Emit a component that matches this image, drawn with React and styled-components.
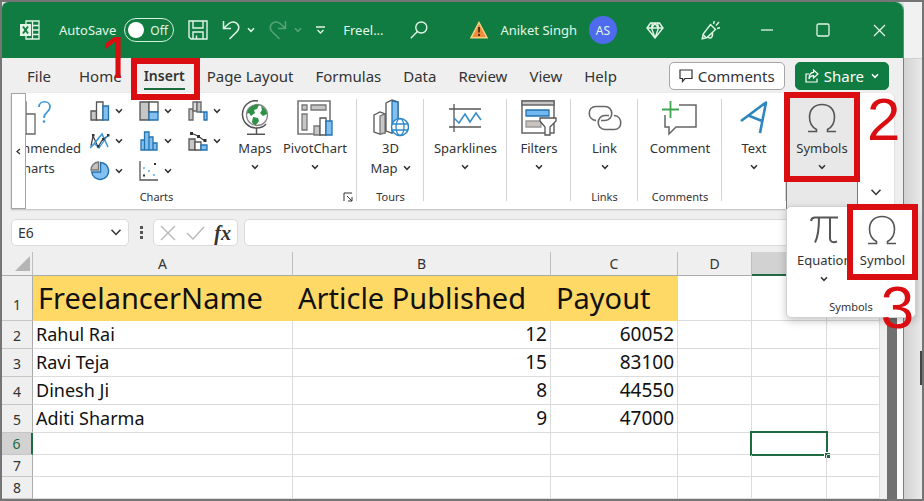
import React from 'react';
import styled, { createGlobalStyle, css } from 'styled-components';

const GlobalStyle = createGlobalStyle`
    *, *::before, *::after {
        box-sizing: border-box;
    }

    body {
        margin: 0;
        font-family: "Noto Sans", "Open Sans", sans-serif;
        color: #333;
    }

    button, input {
        font: inherit;
        color: inherit;
    }

    svg {
        display: block;
        flex: none;
    }
`;

const Frame = styled.div`
    display: flex;
    min-height: 100vh;
    border: 2px solid #757575;
    background-color: #e4e4e4;
    overflow: hidden;
`;

const Window = styled.main`
    display: flex;
    flex-direction: column;
    flex: 1;
    min-width: 0;
    background-color: #efefef;
    border-right: 1px solid #4c9a70;
    border-radius: 6px 8px 0 0;
`;

const Desktop = styled.aside`
    display: flex;
    flex-direction: column;
    justify-content: space-between;
    align-items: flex-end;
    width: 18px;
    background: linear-gradient(to right, #d2d2d2, #e9e9e9);
`;

const DesktopTop = styled.div`
    width: 100%;
    height: 57px;
    background-color: #f1f1f1;
    border-bottom: 1px solid #d0d0d0;
`;

const DesktopHandle = styled.div`
    width: 2px;
    height: 34px;
    margin-bottom: 114px;
    background-color: #444;
`;

const BareButton = styled.button`
    display: flex;
    align-items: center;
    justify-content: center;
    padding: 0;
    border: none;
    background: none;
`;

/* title bar */

const TitleBar = styled.header`
    display: flex;
    justify-content: space-between;
    align-items: center;
    height: 56px;
    padding-left: 18px;
    background-color: #107c41;
    border-radius: 6px 8px 0 0;
    color: #e2f6e8;
    font-size: 13px;
`;

const TitleGroup = styled.div`
    display: flex;
    align-items: center;
    gap: ${props => props.$gap}px;
    white-space: nowrap;
`;

const Toggle = styled.label`
    display: flex;
    align-items: center;
    gap: 6px;
    width: 50px;
    height: 24px;
    padding-left: 3px;
    border: 1px solid #d5f0de;
    border-radius: 12px;
    font-size: 12px;
`;

const ToggleInput = styled.input`
    appearance: none;
    width: 16px;
    height: 16px;
    margin: 0;
    border-radius: 50%;
    background-color: white;
`;

const FileName = styled.span`
    padding: 0 12px 0 4px;
`;

const Avatar = styled.span`
    display: flex;
    align-items: center;
    justify-content: center;
    width: 28px;
    height: 28px;
    border-radius: 50%;
    background-color: #4f6bed;
    font-size: 12px;
`;

const WindowButtons = styled.div`
    display: flex;
    gap: 8px;
`;

const WindowButton = styled(BareButton)`
    width: 48px;
    height: 40px;
`;

/* tabs */

const TabBar = styled.nav`
    display: flex;
    align-items: center;
    justify-content: space-between;
    height: 35px;
    padding: 0 14px 0 25px;
    font-size: 15px;
`;

const Tabs = styled.div`
    display: flex;
    gap: 22px;
`;

const Tab = styled(BareButton)`
    position: relative;
    line-height: 24px;
    white-space: nowrap;

    &:first-child {
        margin-right: 6px;
    }

    ${props => props.$active && css`
        font-size: 14px;
        font-weight: 600;
        box-shadow: 0 2px 0 #1e6b41;
    `}
`;

const TabActions = styled.div`
    display: flex;
    gap: 10px;
`;

const ActionButton = styled(BareButton)`
    gap: 5px;
    height: 28px;
    padding: 0 9px;
    border: 1px solid ${props => (props.$primary ? '#107c41' : '#a5a5a5')};
    border-radius: 5px;
    background-color: ${props => (props.$primary ? '#107c41' : 'white')};
    color: ${props => (props.$primary ? 'white' : '#333')};
`;

const ShareText = styled.span`
    margin-right: 2px;
`;

/* tutorial marks */

const Highlight = styled.span`
    position: absolute;
    inset: ${props => props.$inset};
    border: 6px solid #da0d10;
    z-index: 5;
    pointer-events: none;
`;

const StepNumber = styled.span`
    position: absolute;
    left: ${props => props.$left}px;
    top: ${props => props.$top}px;
    z-index: 6;
    font-family: ${props => (props.$plain ? 'Inter' : '"Liberation Sans"')}, Arial, sans-serif;
    font-size: ${props => (props.$plain ? 56 : 60)}px;
    font-weight: 400;
    line-height: 60px;
    color: #da0d10;
    pointer-events: none;
`;

/* ribbon */

const Ribbon = styled.section`
    display: flex;
    height: 116px;
    margin: 0 9px;
    background-color: white;
    border-radius: 0 6px 6px 0;
    box-shadow: 0 1px 2px #bdbdbd;
    font-size: 13px;
`;

const ScrollButton = styled(BareButton)`
    width: 15px;
    border: 1px solid #a3a3a3;
    background-color: white;
`;

const Group = styled.div`
    position: relative;
    display: flex;
    flex-direction: column;
    justify-content: space-between;
    align-items: center;
    width: ${props => props.$width}px;
    padding: 6px 0 4px;

    &::after {
        content: "";
        position: absolute;
        right: 0;
        top: 6px;
        bottom: 8px;
        width: ${props => (props.$open ? 0 : 1)}px;
        background-color: #d4d4d4;
    }

    ${props => props.$open && css`
        padding-bottom: 0;
        background-color: #e8e8e8;
        border: solid #777;
        border-width: 0 1px;
    `}
`;

const ChartsGroup = styled(Group)`
    flex: 1;
    align-items: stretch;
`;

const ChartsBody = styled.div`
    display: flex;
`;

const Clipped = styled.div`
    display: flex;
    justify-content: flex-end;
    width: 55px;
    overflow: hidden;
`;

const MiniGrid = styled.div`
    display: grid;
    grid-template-columns: repeat(3, 49px);
    grid-auto-rows: 30px;
    padding-left: 9px;
    margin-top: -3px;
`;

const MiniButton = styled(BareButton)`
    justify-content: flex-start;
    gap: 5px;
`;

const BigButton = styled(BareButton)`
    position: relative;
    flex: none;
    flex-direction: column;
    justify-content: flex-start;
    gap: 2px;
    min-width: ${props => props.$width || 0}px;
    line-height: 20px;
    white-space: nowrap;
`;

const IconSlot = styled.span`
    display: flex;
    align-items: center;
    justify-content: center;
    height: 38px;
`;

const LabelLine = styled.span`
    display: flex;
    align-items: center;
    justify-content: center;
    gap: 5px;
    min-height: 16px;
    line-height: 18px;
`;

const GroupFooter = styled.div`
    display: flex;
    align-items: center;
    font-size: 11px;
    line-height: 16px;
`;

const FooterLabel = styled.span`
    flex: 1;
    text-align: center;
`;

const Launcher = styled(BareButton)`
    justify-content: flex-end;
    width: 70px;
    padding-right: 4px;
`;

const RibbonEnd = styled.div`
    display: flex;
    align-items: flex-end;
    justify-content: center;
    width: 36px;
    padding-bottom: 12px;
`;

const Menu = styled.div`
    position: absolute;
    left: -1px;
    top: 113px;
    z-index: 4;
    width: 130px;
    padding: 4px 0 2px;
    border: 1px solid #d0d0d0;
    border-radius: 5px;
    background-color: white;
    box-shadow: 0 3px 8px rgba(0, 0, 0, 0.22);
`;

const MenuItems = styled.div`
    display: flex;
    justify-content: space-between;
    height: 88px;
    padding: 0 10px;
`;

/* formula bar */

const FormulaBar = styled.div`
    display: flex;
    align-items: center;
    gap: 6px;
    padding: 10px 9px 6px;
    font-size: 14px;
`;

const Field = styled.div`
    display: flex;
    align-items: center;
    width: ${props => props.$width}px;
    height: 27px;
    padding: 0 6px;
    border: 1px solid #dadada;
    border-radius: 5px;
    background-color: white;
`;

const FieldInput = styled.input`
    flex: 1;
    width: 100%;
    min-width: 0;
    padding: 0;
    border: none;
    outline: none;
    background: none;
`;

const WideField = styled(Field)`
    flex: 1;
`;

const Dots = styled.span`
    display: flex;
    justify-content: center;
    width: 12px;
`;

const FunctionField = styled(Field)`
    justify-content: space-between;
`;

const FxButton = styled(BareButton)`
    font-family: "Liberation Serif", serif;
    font-size: 20px;
    font-style: italic;
    font-weight: 700;
    line-height: 20px;
`;

/* sheet */

const SheetArea = styled.div`
    display: flex;
    flex: 1;
`;

const Sheet = styled.table`
    flex: 1;
    width: 100%;
    table-layout: fixed;
    border-collapse: separate;
    border-spacing: 0;
    background-color: white;
`;

const ColumnHead = styled.th`
    height: 24px;
    padding: 0;
    border-right: 1px solid #bdbdbd;
    border-bottom: ${props => (props.$active ? '2px solid #1e6b41' : '1px solid #ababab')};
    background-color: ${props => (props.$active ? '#d2d2d2' : '#efefef')};
    font-size: 14px;
    font-weight: 400;
    line-height: 20px;
`;

const RowHead = styled.th`
    padding: 0 0 ${props => props.$pad}px;
    border-right: ${props => (props.$active ? '2px solid #1e6b41' : '1px solid #ababab')};
    border-bottom: 1px solid #c6c6c6;
    background-color: ${props => (props.$active ? '#d2d2d2' : '#efefef')};
    color: ${props => (props.$active ? '#1e6b41' : '#333')};
    font-size: 14px;
    font-weight: 400;
    line-height: 20px;
    vertical-align: bottom;
`;

const Corner = styled(ColumnHead)`
    svg {
        margin-left: 13px;
    }
`;

const Row = styled.tr`
    height: ${props => props.$height}px;
`;

const Cell = styled.td`
    position: relative;
    padding: 0 3px;
    border-right: 1px solid #dcdcdc;
    border-bottom: 1px solid #dcdcdc;
    color: #111;
    font-size: ${props => (props.$number ? 19 : 18)}px;
    line-height: 21px;
    text-align: ${props => (props.$number ? 'right' : 'left')};
    white-space: nowrap;

    ${props => props.$heading && css`
        padding: 0 5px;
        border-color: #ffd966;
        background-color: #ffd966;
        font-size: 29px;
        line-height: 40px;
    `}
`;

const ActiveOutline = styled.span`
    position: absolute;
    inset: -2px;
    border: 2px solid #1e6b41;

    &::after {
        content: "";
        position: absolute;
        right: -4px;
        bottom: -4px;
        width: 6px;
        height: 6px;
        border: solid white;
        border-width: 1px 0 0 1px;
        background-color: #1e6b41;
    }
`;

const ScrollBar = styled.div`
    width: 23px;
    padding-left: 7px;
    padding-right: 6px;
    background: linear-gradient(to right, #efefef 7px, #fafafa 7px);
`;

const Thumb = styled.div`
    height: 100%;
    background-color: #707070;
`;

/* icons */

const Svg = ({ w, h = w, box, children, stroke = 'currentColor', sw = 1.3 }) => (
    <svg
        width={w}
        height={h}
        viewBox={box || `0 0 ${w} ${h}`}
        fill="none"
        stroke={stroke}
        strokeWidth={sw}
        aria-hidden="true"
    >
        {children}
    </svg>
);

const Chevron = ({ w = 8, color = 'currentColor' }) => (
    <Svg w={w} h={w * 0.75} box="0 0 8 6" stroke={color} sw={w > 9 ? 1 : 1.5}>
        <path d="M1 1.2 4 4.3 7 1.2" />
    </Svg>
);

const ExcelIcon = () => (
    <Svg w={20} stroke="#e2f6e8">
        <path d="M6 4V1h13v18H6v-3M12.500 1v18M12 5.500h7M12 10h7M12 14.500h7" />
        <rect x="0" y="4" width="11" height="12" fill="#e2f6e8" stroke="none" />
        <path d="M3 6.500 8 13.500M8 6.500 3 13.500" stroke="#107c41" strokeWidth="1.900" />
    </Svg>
);

const SaveIcon = () => (
    <Svg w={20} sw={1.4}>
        <path d="M1 1h18v18H3l-2-2zM5 1v7h10V1M5 19v-7h10v7M8.500 19v-3.500" />
    </Svg>
);

const UndoIcon = () => (
    <Svg w={18} h={20} sw={1.5}>
        <path d="M1.500 1v7.500H9M1.800 8 7 3.500C10 1 14 1.600 15.800 4.500c1.600 2.600 1 5.300-1 7.300L7.500 19" />
    </Svg>
);

const RedoIcon = () => (
    <Svg w={18} h={20} stroke="#55a578" sw={1.5}>
        <path d="M16.500 1v7.500H9M16.200 8 11 3.500C8 1 4 1.600 2.200 4.500c-1.600 2.600-1 5.300 1 7.300L10.500 19" />
    </Svg>
);

const CustomizeIcon = () => (
    <Svg w={9} h={9}>
        <path d="M0 1h9M1.500 4l3 3 3-3" />
    </Svg>
);

const SearchIcon = () => (
    <Svg w={18} sw={1.4}>
        <circle cx="11.300" cy="6.500" r="5.500" />
        <path d="M7.400 10.500.8 17.200" />
    </Svg>
);

const WarningIcon = () => (
    <Svg w={18}>
        <path d="M9 1.500 17 16.800H1z" fill="#f08a3c" stroke="#f3cf80" strokeWidth="1.500" />
        <path d="M9 6v5.500M9 13v2" stroke="#4a2a10" strokeWidth="1.800" />
    </Svg>
);

const DiamondIcon = () => (
    <Svg w={18} h={17} sw={1.4}>
        <path d="M4.500 1h9L17 6l-8 10L1 6zM1 6h16M6.500 1 5.500 6 9 16l3.500-10-1-5M5.500 6 9 1.500 12.500 6" />
    </Svg>
);

const PenIcon = () => (
    <Svg w={20} sw={1.4}>
        <path d="M9.500 4.500 14.500 9.500 6 17.500 1.200 18.800 2.200 14zM2.500 15l3 3M7 16.500c1 3 5 2 4.500-3.500M12.500 4l.8-3M15 5.500l3-3.500M16 8.500l3-.8" />
    </Svg>
);

const CommentsIcon = () => (
    <Svg w={14} h={14} sw={1.2}>
        <path d="M1 1h12v8.500H6L3.500 12.500v-3H1z" />
    </Svg>
);

const ShareIcon = () => (
    <Svg w={14} h={14} sw={1.2}>
        <path d="M4 5H1v8h11V9.500M8.500 1l4.500 4-4.500 4V6.700C6.300 6.700 4.800 7.700 4 10c0-4 1.800-6.500 4.500-6.700z" />
    </Svg>
);

const RecommendedIcon = () => (
    <Svg w={60} h={36} stroke="#666">
        <path d="M2 12h10v22H2z" />
        <path d="M12 2h9v32h-9z" fill="#c6c6c6" />
        <path d="M21 14h9v20h-9z" fill="#fff" />
        <path d="M34 7c0-7 11-7 11 0 0 5.500-6 5-6 11" stroke="#3a96d6" strokeWidth="1.700" />
        <circle cx="39" cy="21.500" r="1.300" fill="#3a96d6" stroke="none" />
    </Svg>
);

const ColumnIcon = () => (
    <Svg w={20} stroke="#555">
        <path d="M1 10h5.500v9H1z" fill="#c6c6c6" />
        <path d="M6.500 1H13v18H6.500z" fill="#fff" />
        <path d="M13 5h5.500v14H13z" fill="#83c0f0" stroke="#2372b0" />
    </Svg>
);

const LineIcon = () => (
    <Svg w={20} h={18}>
        <path d="m1 14 2-10 5 11 5-8 5-3" stroke="#444" />
        <path d="m0 16 4-4 8-10 6 13" stroke="#3a96d6" strokeWidth="1.600" />
        <path d="m4 11 5 5 9-13" stroke="#3a96d6" />
        <path d="M2 2h2.500v2.500H2zM7 13h2.500v2.500H7zM12 6h2.500v2.500H12zM17 2h2.500v2.500H17z" fill="#333" stroke="none" />
    </Svg>
);

const PieIcon = () => (
    <Svg w={20}>
        <path d="M10.500 1.500a8.500 8.500 0 1 1-8.800 9.500h8.800z" fill="#83c0f0" stroke="#2372b0" strokeWidth="1.500" />
        <path d="M8.500 1v8H1a8 8 0 0 1 7.500-8z" fill="#c9c3bf" stroke="#777" />
    </Svg>
);

const TreemapIcon = () => (
    <Svg w={20} stroke="#555">
        <path d="M1 1h9v18H1z" fill="#c6c6c6" />
        <path d="M10 1h9v10h-9z" fill="#fff" />
        <path d="M10 11h9v8h-9z" fill="#83c0f0" stroke="#2372b0" />
    </Svg>
);

const HistogramIcon = () => (
    <Svg w={20} h={20} stroke="#2372b0">
        <path d="M2 9h3.500v10H2zM5.500 1H10v18H5.500zM10 6h4v13h-4zM14 12h4v7h-4z" fill="#83c0f0" />
    </Svg>
);

const ScatterIcon = () => (
    <Svg w={20} stroke="#555">
        <path d="M1 0v19h18" />
        <path d="M15 2h2v2h-2zM4 13.500h2v2H4z" fill="#333" stroke="none" />
        <path d="M4 6h2v2H4zM9 9h2v2H9zM14 13h2v2h-2z" fill="#83c0f0" stroke="none" />
    </Svg>
);

const WaterfallIcon = () => (
    <Svg w={20} stroke="#666">
        <path d="M1 8h4v11H1z" fill="#c6c6c6" />
        <path d="M5 1h4v9H5z" fill="#ddd" />
        <path d="M9 1h4v10H9z" fill="#c6c6c6" />
        <path d="M12 11h4v8h3v-8h-5z" fill="#83c0f0" stroke="#2372b0" />
    </Svg>
);

const ComboIcon = () => (
    <Svg w={20} stroke="#555">
        <path d="M1 8h6v11H1z" fill="#c6c6c6" />
        <path d="M7 11h6v8H7z" fill="#fff" />
        <path d="M13 14h6v5h-6z" fill="#83c0f0" stroke="#2372b0" />
        <path d="m3 2 7 3 7 5" stroke="#444" />
        <path d="M2 1h3v3H2zM9 4h3v3H9zM15.500 8h3v3h-3z" fill="#333" stroke="none" />
    </Svg>
);

const GlobeIcon = () => (
    <Svg w={28} h={36} stroke="#555">
        <circle cx="16" cy="15" r="10.500" fill="#fff" stroke="#888" />
        <path d="M7 10c3-5 8-6 11-5l-2 4-3 1 1 3-4 3-2-3-2 1zM20 6c4 2 6 5 6 8l-4 2-3-3 2-3zM12 17l5 1 1 3-3 4c-2 0-4-2-4-3z" fill="#2f9148" stroke="none" />
        <path d="M17 1C8-1 1 7 1.500 15c.3 7 6 13 14 13 4 0 7.500-1.500 9.500-4M15.500 28v6M6 34.300h18" strokeWidth="1.500" />
    </Svg>
);

const PivotIcon = () => (
    <Svg w={36} stroke="#777">
        <path d="M1 1h32v33H1z" fill="#fff" strokeWidth="1.600" />
        <path d="M5 5h5v5H5zM14 5h15v5H14zM5 14h5v16H5z" fill="#c6c6c6" />
        <path d="M17 26h6v9h-6z" fill="#c6c6c6" />
        <path d="M23 18h6v17h-6z" fill="#fff" stroke="#555" />
        <path d="M29 21h6v14h-6z" fill="#83c0f0" stroke="#2372b0" />
    </Svg>
);

const Map3dIcon = () => (
    <Svg w={36} h={38} stroke="#555">
        <path d="m1 16 6-3 5 2v19l-5 1-6-2z" fill="#fff" />
        <path d="M7 17v18l5-1V15z" fill="#c6c6c6" stroke="#777" />
        <path d="m13 4 6-3 6 2v28l-6 3-6-2z" fill="#fff" />
        <path d="M19 2v32l6-3V3z" fill="#83c0f0" stroke="#2372b0" />
        <circle cx="27" cy="28" r="8.500" fill="#fff" stroke="#2d87c8" strokeWidth="1.500" />
        <ellipse cx="27" cy="28" rx="4" ry="8.500" stroke="#2d87c8" />
        <path d="M19 25h16M19 31h16" stroke="#2d87c8" />
    </Svg>
);

const SparkIcon = () => (
    <Svg w={34} h={30} stroke="#555">
        <path d="M1 6h32M1 24h32" strokeWidth="1.500" />
        <path d="M6 1v28" />
        <path d="m6 15 5 5 6-9 5 8 6-9 5 7" stroke="#3a8fc8" strokeWidth="1.600" />
    </Svg>
);

const FilterIcon = () => (
    <Svg w={36} stroke="#666">
        <path d="M1 1h32v32H1z" fill="#fff" strokeWidth="1.500" />
        <path d="M1 1h32v4H1z" fill="#c6c6c6" />
        <path d="M5 10h23v6H5z" fill="#72b8f0" stroke="#2372b0" />
        <path d="M5 21h15v6H5z" fill="#c9c3bf" stroke="#999" />
        <path d="M19 18h16v3l-6 6v8h-5v-8l-5-6z" fill="#fff" stroke="#555" />
    </Svg>
);

const LinkIcon = () => (
    <Svg w={34} h={26} stroke="#666" sw={1.6}>
        <path d="M8 15.500C-1 15-1 1.500 8 1.500h9c9 0 9 14 0 14h-4" />
        <path d="M26 10.500c9 .5 9 14 0 14h-9c-9 0-9-14 0-14h4" />
    </Svg>
);

const NewCommentIcon = () => (
    <Svg w={36} h={36} stroke="#666" sw={1.5}>
        <path d="M17 5h17v22H14l-7 7v-7H3V15" />
        <path d="M0 9.500h17M8.500 1v17" stroke="#3fa550" strokeWidth="1.800" />
    </Svg>
);

const TextIcon = () => (
    <Svg w={28} h={34} stroke="#2e86bd" sw={2.6}>
        <path d="M1 20 26 1.500 20 32M8.500 14.500 22 20" strokeLinejoin="round" />
    </Svg>
);

const OmegaIcon = () => (
    <Svg w={30} h={30} stroke="#555" sw={1.6}>
        <path d="M1 28.500h8.500v-2C4.500 24 2.500 19 2.500 14 2.500 6.500 7.500 1.500 15 1.500S27.500 6.500 27.500 14c0 5-2 10-7 12.500v2H29" />
    </Svg>
);

const PiIcon = () => (
    <Svg w={29} h={28} stroke="#555" sw={2}>
        <path d="M1 5c.5-3 2-3.500 4-3.500h23M9 1.500C9 13 8.500 20 5 26.500M20 1.500v21c0 3.500 3 4.500 7 3" />
    </Svg>
);

const LauncherIcon = () => (
    <Svg w={10} h={10} sw={1}>
        <path d="M1 9V1h8M4 4l5 5M9 5v4H5" />
    </Svg>
);

const DotsIcon = () => (
    <Svg w={3} h={13} stroke="none">
        <path d="M0 0h3v3H0zM0 5h3v3H0zM0 10h3v3H0z" fill="#555" />
    </Svg>
);

const tabs = ['File', 'Home', 'Insert', 'Page Layout', 'Formulas', 'Data', 'Review', 'View', 'Help'];

const miniCharts = [
    ['Column chart', ColumnIcon],
    ['Hierarchy chart', TreemapIcon],
    ['Waterfall chart', WaterfallIcon],
    ['Line chart', LineIcon],
    ['Statistic chart', HistogramIcon],
    ['Combo chart', ComboIcon],
    ['Pie chart', PieIcon],
    ['Scatter chart', ScatterIcon],
];

const groups = [
    { name: 'Tours', width: 67, icon: Map3dIcon, lines: ['3D', 'Map'], inline: true },
    { width: 83, icon: SparkIcon, lines: ['Sparklines'], arrow: true },
    { width: 64, icon: FilterIcon, lines: ['Filters'], arrow: true },
    { name: 'Links', width: 67, icon: LinkIcon, lines: ['Link'], arrow: true },
    { name: 'Comments', width: 84, icon: NewCommentIcon, lines: ['Comment'] },
    { width: 64, icon: TextIcon, lines: ['Text'], arrow: true },
];

const columns = ['A', 'B', 'C', 'D', 'E', 'F'];

const rows = [
    { height: 45, pad: 5, heading: true, cells: ['FreelancerName', 'Article Published', 'Payout'] },
    { height: 28, pad: 2, cells: ['Rahul Rai', 12, 60052] },
    { height: 28, pad: 2, cells: ['Ravi Teja', 15, 83100] },
    { height: 28, pad: 2, cells: ['Dinesh Ji', 8, 44550] },
    { height: 28, pad: 2, cells: ['Aditi Sharma', 9, 47000] },
    { height: 22, pad: 0, cells: [] },
    { height: 22, pad: 0, cells: [] },
    { height: 22, pad: 0, cells: [] },
];

const RibbonButton = ({ icon: Icon, lines, arrow, inline, width, children }) => (
    <BigButton type="button" $width={width}>
        <IconSlot><Icon /></IconSlot>
        {lines.map((line, i) => (
            <LabelLine key={line}>
                {line}
                {inline && i === lines.length - 1 && <Chevron />}
            </LabelLine>
        ))}
        {arrow && <LabelLine><Chevron /></LabelLine>}
        {children}
    </BigButton>
);

const TopBar = () => (
    <TitleBar>
        <TitleGroup $gap={14}>
            <TitleGroup $gap={19}>
                <ExcelIcon />
                <TitleGroup $gap={8}>
                    <span id="autosave">AutoSave</span>
                    <Toggle>
                        <ToggleInput type="checkbox" role="switch" aria-labelledby="autosave" />
                        Off
                    </Toggle>
                </TitleGroup>
            </TitleGroup>
            <BareButton type="button" aria-label="Save"><SaveIcon /></BareButton>
            <TitleGroup $gap={7}>
                <BareButton type="button" aria-label="Undo"><UndoIcon /></BareButton>
                <Chevron />
            </TitleGroup>
            <TitleGroup $gap={7}>
                <BareButton type="button" aria-label="Redo"><RedoIcon /></BareButton>
                <Chevron color="#55a578" />
            </TitleGroup>
            <BareButton type="button" aria-label="Customize toolbar"><CustomizeIcon /></BareButton>
            <FileName>Freel...</FileName>
            <BareButton type="button" aria-label="Search"><SearchIcon /></BareButton>
        </TitleGroup>
        <TitleGroup $gap={14}>
            <TitleGroup $gap={12}>
                <WarningIcon />
                <span>Aniket Singh</span>
                <Avatar>AS</Avatar>
            </TitleGroup>
            <WindowButtons>
                <WindowButton type="button" aria-label="Premium"><DiamondIcon /></WindowButton>
                <WindowButton type="button" aria-label="Draw"><PenIcon /></WindowButton>
                <WindowButton type="button" aria-label="Minimize">
                    <Svg w={12}><path d="M0 6h12" /></Svg>
                </WindowButton>
                <WindowButton type="button" aria-label="Maximize">
                    <Svg w={14}><rect x="1" y="1" width="12" height="12" rx="1.500" /></Svg>
                </WindowButton>
                <WindowButton type="button" aria-label="Close">
                    <Svg w={13}><path d="m1 1 11 11M12 1 1 12" /></Svg>
                </WindowButton>
            </WindowButtons>
        </TitleGroup>
    </TitleBar>
);

const TabRow = () => (
    <TabBar>
        <Tabs>
            {tabs.map(tab => (
                <Tab key={tab} type="button" $active={tab === 'Insert'}>
                    {tab}
                    {tab === 'Insert' && (
                        <>
                            <Highlight $inset="-6px -15px -12px -13px" />
                            <StepNumber $plain $left={-41} $top={-36}>1</StepNumber>
                        </>
                    )}
                </Tab>
            ))}
        </Tabs>
        <TabActions>
            <ActionButton type="button"><CommentsIcon />Comments</ActionButton>
            <ActionButton type="button" $primary>
                <ShareIcon />
                <ShareText>Share</ShareText>
                <Chevron />
            </ActionButton>
        </TabActions>
    </TabBar>
);

const SymbolsMenu = () => (
    <Menu>
        <MenuItems>
            <RibbonButton icon={PiIcon} lines={['Equation']} arrow />
            <RibbonButton icon={OmegaIcon} lines={['Symbol']}>
                <Highlight $inset="-7px -13px 19px -13px" />
                <StepNumber $left={21} $top={67}>3</StepNumber>
            </RibbonButton>
        </MenuItems>
        <GroupFooter><FooterLabel>Symbols</FooterLabel></GroupFooter>
    </Menu>
);

const InsertRibbon = () => (
    <Ribbon>
        <ScrollButton type="button" aria-label="Scroll left">
            <Svg w={5} h={7}><path d="M4 1 1 3.500 4 6" /></Svg>
        </ScrollButton>
        <ChartsGroup>
            <ChartsBody>
                <Clipped>
                    <RibbonButton icon={RecommendedIcon} lines={['Recommended', 'Charts']} />
                </Clipped>
                <MiniGrid>
                    {miniCharts.map(([name, Icon]) => (
                        <MiniButton key={name} type="button" aria-label={name}>
                            <Icon />
                            <Chevron />
                        </MiniButton>
                    ))}
                </MiniGrid>
                <RibbonButton icon={GlobeIcon} lines={['Maps']} arrow width={36} />
                <RibbonButton icon={PivotIcon} lines={['PivotChart']} arrow width={84} />
            </ChartsBody>
            <GroupFooter>
                <FooterLabel>Charts</FooterLabel>
                <Launcher type="button" aria-label="Chart options"><LauncherIcon /></Launcher>
            </GroupFooter>
        </ChartsGroup>
        {groups.map(({ name, width, ...button }) => (
            <Group key={button.lines[0]} $width={width}>
                <RibbonButton {...button} />
                <GroupFooter>{name}</GroupFooter>
            </Group>
        ))}
        <Group $width={72} $open>
            <RibbonButton icon={OmegaIcon} lines={['Symbols']} arrow width={70}>
                <Highlight $inset="-7px -3px -7px -3px" />
                <StepNumber $left={80} $top={-9}>2</StepNumber>
            </RibbonButton>
            <SymbolsMenu />
        </Group>
        <RibbonEnd>
            <BareButton type="button" aria-label="Collapse ribbon"><Chevron w={12} /></BareButton>
        </RibbonEnd>
    </Ribbon>
);

const FormulaRow = () => (
    <FormulaBar>
        <Field $width={118}>
            <FieldInput aria-label="Name box" defaultValue="E6" />
            <BareButton type="button" aria-label="Open names"><Chevron w={12} /></BareButton>
        </Field>
        <Dots><DotsIcon /></Dots>
        <FunctionField $width={85}>
            <BareButton type="button" aria-label="Cancel">
                <Svg w={16} stroke="#bbb" sw={1.5}><path d="m1 1 14 14M15 1 1 15" /></Svg>
            </BareButton>
            <BareButton type="button" aria-label="Enter">
                <Svg w={19} h={14} stroke="#bbb" sw={1.5}><path d="m1 7 6 6L18 1" /></Svg>
            </BareButton>
            <FxButton type="button">fx</FxButton>
        </FunctionField>
        <WideField>
            <FieldInput aria-label="Formula" />
        </WideField>
    </FormulaBar>
);

const SheetGrid = () => (
    <SheetArea>
        <Sheet>
            <colgroup>
                <col width="31" />
                <col width="260" />
                <col width="258" />
                <col width="127" />
                <col width="74" />
                <col width="75" />
                <col />
            </colgroup>
            <thead>
                <tr>
                    <Corner>
                        <Svg w={15} stroke="none"><path d="M15 0v15H0z" fill="#b5b5b5" /></Svg>
                    </Corner>
                    {columns.map(name => (
                        <ColumnHead key={name} scope="col" $active={name === 'E'}>
                            {name === 'E' || name === 'F' ? '' : name}
                        </ColumnHead>
                    ))}
                </tr>
            </thead>
            <tbody>
                {rows.map((row, i) => (
                    <Row key={i} $height={row.height}>
                        <RowHead scope="row" $active={i === 5} $pad={row.pad}>{i + 1}</RowHead>
                        {columns.map((name, c) => (
                            <Cell
                                key={name}
                                $heading={row.heading && c < 3}
                                $number={typeof row.cells[c] === 'number'}
                            >
                                {row.cells[c]}
                                {i === 5 && name === 'E' && <ActiveOutline />}
                            </Cell>
                        ))}
                    </Row>
                ))}
            </tbody>
        </Sheet>
        <ScrollBar><Thumb /></ScrollBar>
    </SheetArea>
);

const App = () => {
    return (
        <>
            <GlobalStyle />
            <Frame>
                <Window>
                    <TopBar />
                    <TabRow />
                    <InsertRibbon />
                    <FormulaRow />
                    <SheetGrid />
                </Window>
                <Desktop>
                    <DesktopTop />
                    <DesktopHandle />
                </Desktop>
            </Frame>
        </>
    );
};

export default App;
